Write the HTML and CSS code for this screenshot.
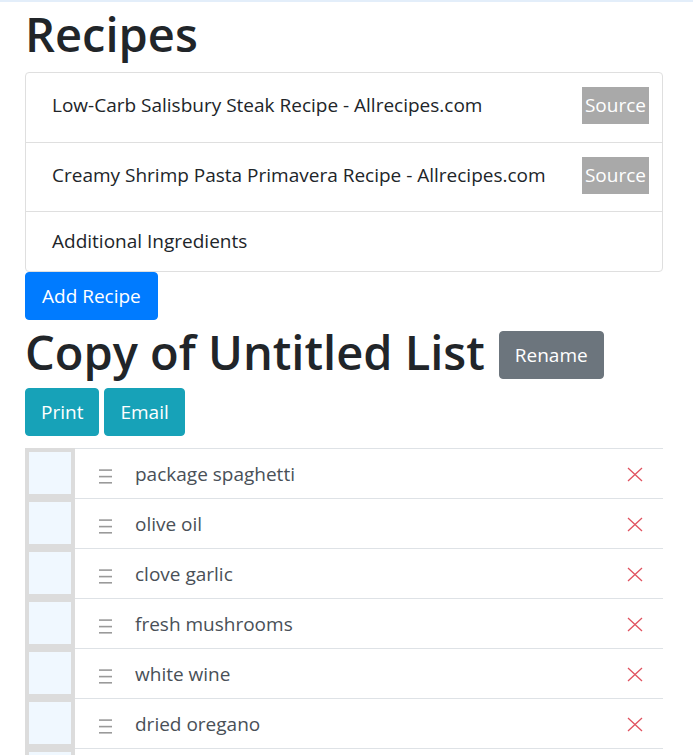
FILE: index.html
```html
<!DOCTYPE html>
<html>
<head>
<meta charset="utf-8">
<link rel="stylesheet" href="styles.css">
</head>
<body>
<div class="topbar"></div>
<div class="container">
  <h1 class="title">Recipes</h1>
  <ul class="recipes">
    <li class="recipe"><span class="recipe-name">Low-Carb Salisbury Steak Recipe - Allrecipes.com</span><span class="source">Source</span></li>
    <li class="recipe"><span class="recipe-name">Creamy Shrimp Pasta Primavera Recipe - Allrecipes.com</span><span class="source">Source</span></li>
    <li class="recipe plain"><span class="recipe-name">Additional Ingredients</span></li>
  </ul>
  <button class="btn btn-primary">Add Recipe</button>
  <div class="list-head">
    <h2 class="title">Copy of Untitled List</h2>
    <button class="btn btn-secondary">Rename</button>
  </div>
  <div class="actions">
    <button class="btn btn-info">Print</button>
    <button class="btn btn-info">Email</button>
  </div>
  <div class="items">
    <div class="item"><div class="check"><span class="box"></span></div><div class="item-body"><svg class="handle" width="16" height="16" viewBox="0 0 16 16"><rect x="2" y="2.3" width="13" height="1.6"/><rect x="2" y="8.8" width="13" height="1.6"/><rect x="2" y="15" width="13" height="1.6"/></svg><span class="item-text">package spaghetti</span><svg class="remove" width="16" height="16" viewBox="0 0 16 16"><path d="M1 1L15 14M15 1L1 14"/></svg></div></div>
    <div class="item"><div class="check"><span class="box"></span></div><div class="item-body"><svg class="handle" width="16" height="16" viewBox="0 0 16 16"><rect x="2" y="2.3" width="13" height="1.6"/><rect x="2" y="8.8" width="13" height="1.6"/><rect x="2" y="15" width="13" height="1.6"/></svg><span class="item-text">olive oil</span><svg class="remove" width="16" height="16" viewBox="0 0 16 16"><path d="M1 1L15 14M15 1L1 14"/></svg></div></div>
    <div class="item"><div class="check"><span class="box"></span></div><div class="item-body"><svg class="handle" width="16" height="16" viewBox="0 0 16 16"><rect x="2" y="2.3" width="13" height="1.6"/><rect x="2" y="8.8" width="13" height="1.6"/><rect x="2" y="15" width="13" height="1.6"/></svg><span class="item-text">clove garlic</span><svg class="remove" width="16" height="16" viewBox="0 0 16 16"><path d="M1 1L15 14M15 1L1 14"/></svg></div></div>
    <div class="item"><div class="check"><span class="box"></span></div><div class="item-body"><svg class="handle" width="16" height="16" viewBox="0 0 16 16"><rect x="2" y="2.3" width="13" height="1.6"/><rect x="2" y="8.8" width="13" height="1.6"/><rect x="2" y="15" width="13" height="1.6"/></svg><span class="item-text">fresh mushrooms</span><svg class="remove" width="16" height="16" viewBox="0 0 16 16"><path d="M1 1L15 14M15 1L1 14"/></svg></div></div>
    <div class="item"><div class="check"><span class="box"></span></div><div class="item-body"><svg class="handle" width="16" height="16" viewBox="0 0 16 16"><rect x="2" y="2.3" width="13" height="1.6"/><rect x="2" y="8.8" width="13" height="1.6"/><rect x="2" y="15" width="13" height="1.6"/></svg><span class="item-text">white wine</span><svg class="remove" width="16" height="16" viewBox="0 0 16 16"><path d="M1 1L15 14M15 1L1 14"/></svg></div></div>
    <div class="item"><div class="check"><span class="box"></span></div><div class="item-body"><svg class="handle" width="16" height="16" viewBox="0 0 16 16"><rect x="2" y="2.3" width="13" height="1.6"/><rect x="2" y="8.8" width="13" height="1.6"/><rect x="2" y="15" width="13" height="1.6"/></svg><span class="item-text">dried oregano</span><svg class="remove" width="16" height="16" viewBox="0 0 16 16"><path d="M1 1L15 14M15 1L1 14"/></svg></div></div>
    <div class="item last"><div class="check"><span class="box"></span></div><div class="item-body"></div></div>
  </div>
</div>
</body>
</html>
```

FILE: styles.css
```css
* { box-sizing: border-box; }
html, body { margin: 0; padding: 0; }
body {
  font-family: "Open Sans", "Noto Sans", sans-serif;
  color: #212529;
  background: #fff;
  overflow: hidden;
}
.topbar {
  height: 2px;
  background: #e3eefa;
}
.container {
  width: 638px;
  margin-left: 25px;
}
.title {
  font-weight: 600;
  font-size: 47px;
  line-height: 1.2;
  margin: 0;
  color: #212529;
}
h1.title { padding: 4px 0 0 0; height: 70px; }
.recipes {
  list-style: none;
  margin: 0;
  padding: 0;
  border: 1px solid #dfdfdf;
  border-radius: 4px;
}
.recipe {
  display: flex;
  align-items: center;
  justify-content: space-between;
  padding: 14px 13px 17px 26px;
  font-size: 19px;
  line-height: 27px;
  border-top: 1px solid #dfdfdf;
}
.recipe:first-child { border-top: none; padding-bottom: 18px; }
.recipe.plain { padding-top: 16px; padding-bottom: 16px; }
.source {
  background: darkgray;
  color: #fff;
  font-size: 19px;
  line-height: 37px;
  padding: 0 3px;
}
.btn {
  font-family: inherit;
  font-size: 19px;
  line-height: 30px;
  padding: 8px 16px;
  border: 1px solid transparent;
  border-radius: 4px;
  color: #fff;
  cursor: pointer;
}
.btn-primary { background: #007bff; border-color: #007bff; }
.btn-secondary { background: #6c757d; border-color: #6c757d; padding: 8px 15px; }
.btn-info { background: #17a2b8; border-color: #17a2b8; padding: 8px 15px; }
.list-head {
  display: flex;
  align-items: center;
  gap: 14px;
  margin-top: 10px;
  height: 50px;
}
.list-head .title { margin-bottom: 6px; }
.actions {
  display: flex;
  gap: 5px;
  margin-top: 8px;
}
.items {
  margin-top: 12px;
}
.item {
  display: flex;
  height: 50px;
}
.check {
  width: 50px;
  height: 50px;
  padding: 4px;
  background: gainsboro;
}
.box {
  display: block;
  width: 42px;
  height: 42px;
  background: aliceblue;
}
.item-body {
  flex: 1;
  display: flex;
  align-items: center;
  border-top: 1px solid #dee2e6;
  padding: 0 20px 0 22px;
}
.handle { fill: #9a9a9a; width: 16px; height: 18px; margin-top: 2px; }
.item-text {
  flex: 1;
  margin-left: 22px;
  font-size: 19px;
  color: #495057;
}
.remove {
  stroke: #dc3545;
  stroke-width: 1.3;
  fill: none;
  opacity: 0.85;
  margin-top: 3px;
}
```
